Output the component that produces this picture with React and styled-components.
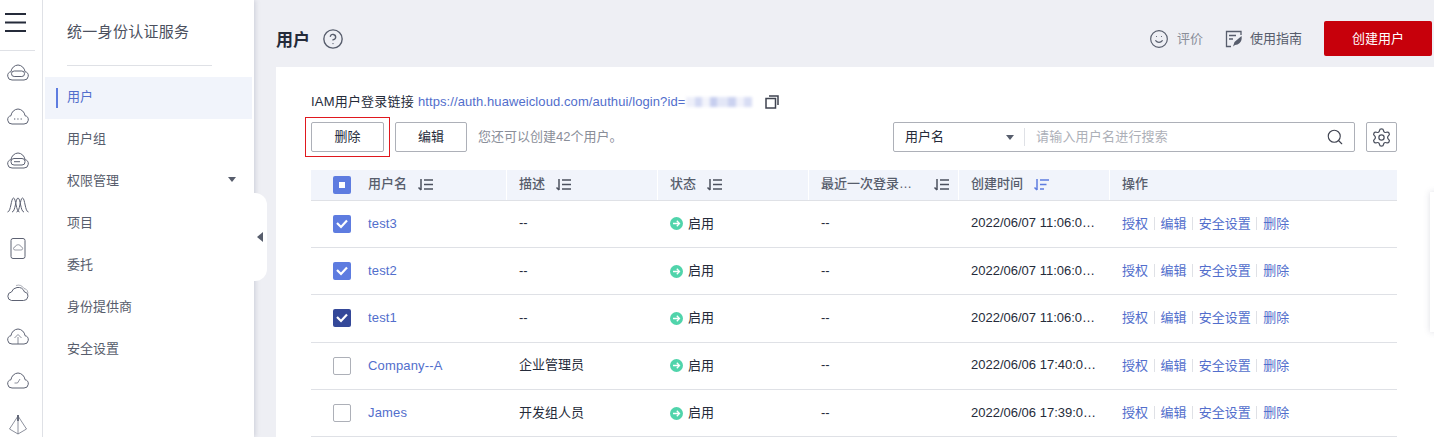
import React from "react";
import styled, { createGlobalStyle } from "styled-components";
import { CircleHelp, Search, Settings, Smile } from "lucide-react";

const cloud = "M6 19h12a4.2 4.2 0 0 0 1-8.3A7.5 7.5 0 0 0 12 4a7.5 7.5 0 0 0-7 6.7A4.2 4.2 0 0 0 6 19z";

const railIcons = [
  <>
    <path d={cloud} />
    <rect x="5.5" y="10" width="13" height="5.5" rx="2.7" />
  </>,
  <>
    <path d={cloud} />
    <path d="M8.3 14h.9M11.5 14h.9M14.7 14h.9" strokeWidth="1.4" />
  </>,
  <>
    <path d={cloud} />
    <rect x="5" y="9.5" width="14" height="6.5" rx="3" />
    <path d="M8 12.700h6" />
  </>,
  <>
    <path d="M1.500 19c3.500 0 3.500-14 6-14s2.500 14 6 14" />
    <path d="M6 19c3.500 0 3.500-14 6-14s2.500 14 6 14" />
    <path d="M10.500 19c3.500 0 3.500-14 6-14s2.500 14 6 14" />
  </>,
  <>
    <rect x="5" y="1.5" width="14" height="20" rx="2" />
    <path d="M9 13h6a1.500 1.500 0 0 0 .3-3A3.300 3.300 0 0 0 9 10a1.500 1.500 0 0 0 0 3z" opacity="0.6" />
  </>,
  <>
    <path d="M5.500 19.500h12a4.300 4.300 0 0 0 1-8.500A7 7 0 0 0 11 6.500a7 7 0 0 0-5.500 4.500A4.300 4.300 0 0 0 5.500 19.500z" />
    <path d="M10 4.500a7 7 0 0 1 8 3 4.300 4.300 0 0 1 3.500 6" opacity="0.5" />
  </>,
  <>
    <path d={cloud} />
    <path d="M12 19v-7M8.500 13l3.500-3.500 3.500 3.500" opacity="0.7" />
  </>,
  <>
    <path d={cloud} />
    <path d="M14 10l-2.500 4h-3" opacity="0.7" />
  </>,
  <>
    <path d="M12 2v19M12 3L3.500 16 12 21l8.500-5z" opacity="0.7" />
    <path d="M12 2v6" strokeWidth="1.8" />
  </>,
];

const GlobalStyle = createGlobalStyle`
  html, body {
    margin: 0;
    height: 437px;
    overflow: hidden;
    background: #fff;
    font-family: "Liberation Sans", "Noto Sans CJK SC", sans-serif;
    font-size: 13px;
    color: #252b3a;
  }
`;

const Page = styled.div`
  display: flex;
  width: 1434px;
  height: 437px;
  overflow: hidden;
`;

const Rail = styled.aside`
  flex: 0 0 42px;
  border-right: 1px solid #dfe1e6;
  background: #fff;
  position: relative;
  z-index: 3;
`;

const RailTop = styled.div`
  width: 35px;
  height: 51px;
  border-bottom: 1px solid #dfe1e6;
  padding: 13px 0 0 5px;
  box-sizing: border-box;
  svg {
    display: block;
  }
`;

const RailItem = styled.div`
  height: 44px;
  width: 35px;
  display: flex;
  align-items: center;
  justify-content: center;
  svg {
    fill: none;
    stroke: #5d6273;
    stroke-width: 1;
  }
`;

const Sidebar = styled.nav`
  flex: 0 0 211px;
  background: #fff;
  position: relative;
  z-index: 2;
  box-shadow: 1px 0 5px rgba(100, 105, 130, 0.25);
`;

const SidebarTitle = styled.div`
  height: 66px;
  margin: 0 42px 11px 24px;
  padding-bottom: 4px;
  box-sizing: border-box;
  border-bottom: 1px solid #dfe1e6;
  display: flex;
  align-items: center;
  font-size: 15px;
  letter-spacing: 0.3px;
  color: #4b505e;
`;

const NavItem = styled.div`
  height: 42px;
  margin: 0 2px;
  padding: 0 16px 5px 22px;
  box-sizing: border-box;
  display: flex;
  align-items: center;
  justify-content: space-between;
  position: relative;
  color: ${(p) => (p.$active ? "#526ecc" : "#575d6c")};
  background: ${(p) => (p.$active ? "#f1f4fb" : "transparent")};
  &::before {
    content: "";
    display: ${(p) => (p.$active ? "block" : "none")};
    position: absolute;
    left: 11px;
    top: 11px;
    width: 2px;
    height: 20px;
    background: #5e7ce0;
  }
`;

const NavCaret = styled.i`
  width: 0;
  height: 0;
  border-left: 4px solid transparent;
  border-right: 4px solid transparent;
  border-top: 5px solid #575d6c;
`;

const CollapseTab = styled.div`
  position: absolute;
  left: 211px;
  top: 193px;
  width: 13px;
  height: 88px;
  background: #fff;
  border-radius: 0 12px 12px 0;
  display: flex;
  align-items: center;
  &::after {
    content: "";
    margin-left: 3px;
    border-top: 5px solid transparent;
    border-bottom: 5px solid transparent;
    border-right: 6px solid #575d6c;
  }
`;

const Main = styled.main`
  flex: 1;
  min-width: 0;
  background: #eeeff4;
  display: flex;
  flex-direction: column;
  padding-left: 22px;
`;

const Head = styled.header`
  height: 67px;
  flex: none;
  display: flex;
  align-items: center;
  padding: 10px 2px 0 0;
  box-sizing: border-box;
`;

const PageTitle = styled.h1`
  margin: 0 0 1px;
  font-size: 17px;
  font-weight: 700;
  color: #252b3a;
`;

const HelpIcon = styled(CircleHelp)`
  margin-left: 12px;
  color: #575d6c;
`;

const HeadActions = styled.div`
  margin-left: auto;
  display: flex;
  align-items: center;
`;

const HeadLink = styled.span`
  display: flex;
  align-items: center;
  gap: ${(p) => p.$gap}px;
  margin-right: ${(p) => p.$after}px;
  color: ${(p) => p.$color};
`;

const HeadLinkText = styled.span`
  padding-bottom: 3px;
`;

const CreateButton = styled.button`
  width: 108px;
  height: 35px;
  border: 0;
  border-radius: 2px;
  background: #c7000b;
  color: #fff;
  font: inherit;
  padding: 0 0 3px;
`;

const Card = styled.section`
  flex: 1;
  background: #fff;
  padding: 26px 37px 0 35px;
  position: relative;
`;

const LoginRow = styled.div`
  height: 18px;
  line-height: 18px;
  display: flex;
  align-items: center;
  color: #252b3a;
  letter-spacing: 0.2px;
  margin-bottom: 11px;
`;

const LoginUrl = styled.span`
  color: #526ecc;
  margin-left: 4px;
  letter-spacing: 0.09px;
`;

const Masked = styled.span`
  width: 70px;
  height: 10px;
  margin-left: 1px;
  background: linear-gradient(90deg, #eef0fa 0 9px, #d3d9f3 9px 16px, #f3f4fb 16px 24px, #c6ceef 24px 31px, #e3e7f7 31px 42px, #cbd2f0 42px 50px, #f1f2fb 50px 58px, #d8ddf4 58px 66px, #fff 66px);
  filter: blur(1.5px);
`;

const CopyIcon = styled.svg`
  margin-left: 9px;
  fill: none;
  stroke: #3f4350;
  stroke-width: 1.5;
`;

const Toolbar = styled.div`
  display: flex;
  align-items: center;
  height: 30px;
  margin-bottom: 18px;
`;

const PlainButton = styled.button`
  width: ${(p) => p.$width}px;
  height: 30px;
  margin-right: 11px;
  padding: 0 0 3px;
  box-sizing: border-box;
  border: 1px solid #adb0b8;
  border-radius: 2px;
  background: #fff;
  color: #252b3a;
  font: inherit;
  position: relative;
  ${(p) =>
    p.$marked &&
    `&::after {
      content: "";
      position: absolute;
      left: -7px;
      right: -7px;
      top: -6px;
      bottom: -6px;
      border: 1px solid #e0181e;
    }`}
`;

const Hint = styled.span`
  color: #8a8e99;
  padding-bottom: 3px;
`;

const SearchBox = styled.div`
  margin-left: auto;
  width: 462px;
  height: 30px;
  box-sizing: border-box;
  border: 1px solid #adb0b8;
  border-radius: 2px;
  display: flex;
  align-items: center;
  padding-left: 11px;
`;

const FieldSelect = styled.div`
  width: 120px;
  height: 18px;
  flex: none;
  box-sizing: border-box;
  border-right: 1px solid #dfe1e6;
  display: flex;
  align-items: center;
  justify-content: space-between;
  padding-right: 10px;
`;

const FieldName = styled.span`
  padding-bottom: 3px;
`;

const Placeholder = styled.span`
  margin-left: 11px;
  padding-bottom: 3px;
  color: #adb0b8;
  letter-spacing: 0.2px;
`;

const SearchIcon = styled(Search)`
  margin-left: auto;
  margin-right: 10px;
  color: #3f4350;
`;

const SettingsButton = styled.div`
  width: 31px;
  height: 30px;
  margin-left: 11px;
  box-sizing: border-box;
  border: 1px solid #adb0b8;
  border-radius: 2px;
  display: flex;
  align-items: center;
  justify-content: center;
  color: #4b505e;
`;

const Grid = "196px 151px 151px 150px 151px 287px";

const HeaderRow = styled.div`
  display: grid;
  grid-template-columns: ${Grid};
  height: 30.7px;
  box-sizing: border-box;
  border-bottom: 1px solid #dfe1e6;
  background: #f1f4fb;
`;

const HeaderCell = styled.div`
  display: flex;
  align-items: center;
  padding-left: ${(p) => (p.$first ? 22 : 12)}px;
  padding-right: 10px;
  min-width: 0;
  color: #575d6c;
  font-weight: 500;
  border-left: ${(p) => (p.$first ? 0 : "1px solid #fff")};
  margin-left: ${(p) => (p.$first ? 0 : "-1px")};
`;

const HeaderText = styled.span`
  white-space: nowrap;
  padding-bottom: 5px;
  flex: ${(p) => (p.$fill ? 1 : "none")};
`;

const SortIcon = styled.svg`
  flex: none;
  margin-left: 10px;
  fill: none;
  stroke: ${(p) => (p.$active ? "#5e7ce0" : "#4b505e")};
  stroke-width: 1.5;
`;

const Row = styled.div`
  display: grid;
  grid-template-columns: ${Grid};
  height: 47.3px;
  box-sizing: border-box;
  border-bottom: 1px solid #dfe1e6;
  align-items: center;
`;

const Cell = styled.div`
  padding: 0 12px 2px;
  min-width: 0;
  white-space: nowrap;
`;

const CjkCell = styled(Cell)`
  padding-bottom: 4px;
`;

const NameCell = styled.div`
  display: flex;
  align-items: center;
  padding-left: 22px;
`;

const CheckBox = styled.span`
  width: 18px;
  height: 18px;
  flex: none;
  margin-right: 17px;
  box-sizing: border-box;
  border-radius: 2px;
  display: flex;
  align-items: center;
  justify-content: center;
  background: ${(p) => ({ on: "#5e7ce0", dark: "#344899", part: "#5e7ce0", off: "#fff" }[p.$state])};
  border: ${(p) => (p.$state === "off" ? "1px solid #adb0b8" : "0")};
`;

const PartMark = styled.i`
  width: 6px;
  height: 6px;
  background: #fff;
`;

const UserLink = styled.span`
  color: #526ecc;
  letter-spacing: 0.15px;
  padding-bottom: 1px;
`;

const Status = styled.div`
  display: flex;
  align-items: center;
  gap: 5px;
  padding-left: 12px;
`;

const StatusText = styled.span`
  padding-bottom: 3px;
`;

const Actions = styled.div`
  display: flex;
  align-items: center;
  padding: 0 0 3px 12px;
`;

const ActionLink = styled.span`
  color: #526ecc;
  & + &::before {
    content: "";
    display: inline-block;
    width: 1px;
    height: 13px;
    margin: 0 5.7px;
    background: #dfe1e6;
    vertical-align: -2px;
  }
`;

const FloatTab = styled.div`
  position: absolute;
  right: -8px;
  top: 125px;
  width: 12px;
  height: 140px;
  background: #fff;
  box-shadow: 0 0 6px rgba(100, 105, 130, 0.22);
`;

const users = [
  { name: "test3", desc: "--", time: "2022/06/07 11:06:0…", state: "on" },
  { name: "test2", desc: "--", time: "2022/06/07 11:06:0…", state: "on" },
  { name: "test1", desc: "--", time: "2022/06/07 11:06:0…", state: "dark" },
  { name: "Company--A", desc: "企业管理员", time: "2022/06/06 17:40:0…", state: "off" },
  { name: "James", desc: "开发组人员", time: "2022/06/06 17:39:0…", state: "off" },
];

const navItems = ["用户", "用户组", "权限管理", "项目", "委托", "身份提供商", "安全设置"];

const Sort = ({ active }) => (
  <SortIcon width="16" height="13" viewBox="0 0 16 13" $active={active}>
    <path d="M4 1v11M1.500 9.500L4 12" />
    {active ? (
      <path d="M7 2h9M7 6.500h6.500M7 11h4" />
    ) : (
      <path d="M7 2h9M7 6.500h9M7 11h9" />
    )}
  </SortIcon>
);

const Tick = () => (
  <svg width="12" height="10" viewBox="0 0 12 10" fill="none" stroke="#fff" strokeWidth="2.2">
    <path d="M1 4l4 4 6-6.500" />
  </svg>
);

const StatusDot = () => (
  <svg width="13" height="13" viewBox="0 0 13 13">
    <circle cx="6.5" cy="6.5" r="6.5" fill="#50d4ab" />
    <path d="M3 6.500h6.500M6.800 3.800l2.700 2.700-2.700 2.700" fill="none" stroke="#fff" strokeWidth="1.3" />
  </svg>
);

const GuideIcon = () => (
  <svg width="18" height="18" viewBox="0 0 18 18" fill="none" stroke="#575d6c" strokeWidth="1.3">
    <path d="M16 5V1.500H1.500v15H6" />
    <path d="M4 5.500h7M4 9h4" />
    <path d="M8 16.500l1.500-4.500L16.500 6c.8 3.500-.5 7-4 8.500l-2.500.5z" fill="#575d6c" stroke="none" />
  </svg>
);

const App = () => (
  <Page>
    <GlobalStyle />
    <Rail>
      <RailTop>
        <svg width="21" height="19" viewBox="0 0 21 19" stroke="#252b3a" strokeWidth="2">
          <path d="M0 1h21M0 9.500h21M0 18h21" />
        </svg>
      </RailTop>
      {railIcons.map((icon, i) => (
        <RailItem key={i}>
          <svg width="24" height="24" viewBox="0 0 24 24">
            {icon}
          </svg>
        </RailItem>
      ))}
    </Rail>
    <Sidebar>
      <SidebarTitle>统一身份认证服务</SidebarTitle>
      {navItems.map((item, i) => (
        <NavItem key={item} $active={i === 0}>
          {item}
          {item === "权限管理" && <NavCaret />}
        </NavItem>
      ))}
      <CollapseTab />
    </Sidebar>
    <Main>
      <Head>
        <PageTitle>用户</PageTitle>
        <HelpIcon size={22} strokeWidth={1.5} />
        <HeadActions>
          <HeadLink $gap={8} $after={22} $color="#8a8e99">
            <Smile size={20} strokeWidth={1.4} color="#575d6c" />
            <HeadLinkText>评价</HeadLinkText>
          </HeadLink>
          <HeadLink $gap={7} $after={22} $color="#575d6c">
            <GuideIcon />
            <HeadLinkText>使用指南</HeadLinkText>
          </HeadLink>
          <CreateButton>创建用户</CreateButton>
        </HeadActions>
      </Head>
      <Card>
        <LoginRow>
          IAM用户登录链接
          <LoginUrl>https://auth.huaweicloud.com/authui/login?id=</LoginUrl>
          <Masked />
          <CopyIcon width="14" height="14" viewBox="0 0 14 14">
            <rect x="1" y="3.5" width="9.5" height="9.5" />
            <path d="M4 1h9v9" />
          </CopyIcon>
        </LoginRow>
        <Toolbar>
          <PlainButton $width={73} $marked>删除</PlainButton>
          <PlainButton $width={72}>编辑</PlainButton>
          <Hint>您还可以创建42个用户。</Hint>
          <SearchBox>
            <FieldSelect>
              <FieldName>用户名</FieldName>
              <NavCaret />
            </FieldSelect>
            <Placeholder>请输入用户名进行搜索</Placeholder>
            <SearchIcon size={18} strokeWidth={1.5} />
          </SearchBox>
          <SettingsButton>
            <Settings size={21} strokeWidth={1.4} />
          </SettingsButton>
        </Toolbar>
        <HeaderRow>
          <HeaderCell $first>
            <CheckBox $state="part">
              <PartMark />
            </CheckBox>
            <HeaderText>用户名</HeaderText>
            <Sort />
          </HeaderCell>
          <HeaderCell>
            <HeaderText>描述</HeaderText>
            <Sort />
          </HeaderCell>
          <HeaderCell>
            <HeaderText>状态</HeaderText>
            <Sort />
          </HeaderCell>
          <HeaderCell>
            <HeaderText $fill>最近一次登录…</HeaderText>
            <Sort />
          </HeaderCell>
          <HeaderCell>
            <HeaderText>创建时间</HeaderText>
            <Sort active />
          </HeaderCell>
          <HeaderCell>
            <HeaderText>操作</HeaderText>
          </HeaderCell>
        </HeaderRow>
        {users.map((u) => (
          <Row key={u.name}>
            <NameCell>
              <CheckBox $state={u.state}>{u.state !== "off" && <Tick />}</CheckBox>
              <UserLink>{u.name}</UserLink>
            </NameCell>
            {u.desc === "--" ? <Cell>{u.desc}</Cell> : <CjkCell>{u.desc}</CjkCell>}
            <Status>
              <StatusDot />
              <StatusText>启用</StatusText>
            </Status>
            <Cell>--</Cell>
            <Cell>{u.time}</Cell>
            <Actions>
              <ActionLink>授权</ActionLink>
              <ActionLink>编辑</ActionLink>
              <ActionLink>安全设置</ActionLink>
              <ActionLink>删除</ActionLink>
            </Actions>
          </Row>
        ))}
        <FloatTab />
      </Card>
    </Main>
  </Page>
);

export default App;
